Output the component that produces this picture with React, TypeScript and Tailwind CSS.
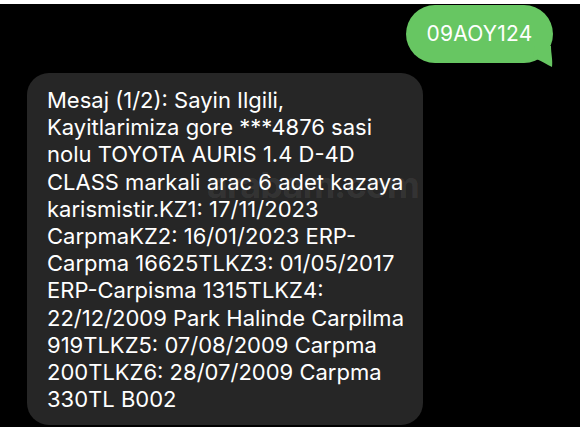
import React from "react";

const lines = [
  "Mesaj (1/2): Sayin Ilgili,",
  "Kayitlarimiza gore ***4876 sasi",
  "nolu TOYOTA AURIS 1.4 D-4D",
  "CLASS markali arac 6 adet kazaya",
  "karismistir.KZ1: 17/11/2023",
  "CarpmaKZ2: 16/01/2023 ERP-",
  "Carpma 16625TLKZ3: 01/05/2017",
  "ERP-Carpisma 1315TLKZ4:",
  "22/12/2009 Park Halinde Carpilma",
  "919TLKZ5: 07/08/2009 Carpma",
  "200TLKZ6: 28/07/2009 Carpma",
  "330TL B002",
];

function SentBubble({ text }: { text: string }) {
  return (
    <div className="relative">
      <div className="h-[58px] w-[147px] rounded-full bg-[#67c662] flex items-center justify-center text-white text-[21px] tracking-[0.2px]">
        {text}
      </div>
      {/* little tail hanging off the bottom right */}
      <svg className="absolute right-[-6px] bottom-[-5px]" width="28" height="22" viewBox="0 0 28 22">
        <path d="M4 0 L20 0 C20 8 22 14 21 21 C16 19 10 14 2 12 Z" fill="#67c662" />
      </svg>
    </div>
  );
}

export default function App() {
  return (
    <div className="w-[580px] h-[435px] bg-white pt-[4px] pb-[8px]" style={{ fontFamily: "Inter, 'Noto Sans', sans-serif" }}>
      <div className="h-[423px] bg-black flex flex-col">
        <div className="flex justify-end pr-[27px] pt-[1px]">
          <SentBubble text="09AOY124" />
        </div>
        <div className="relative ml-[27px] mt-[10px] w-[396px] h-[352px] rounded-[22px] bg-[#262626] pl-[20px] pt-[14px] overflow-hidden">
          <div className="absolute left-[180px] top-[94px] text-[36px] leading-none font-bold text-white/[0.08] tracking-tight">
            arabam.com
          </div>
          <div className="relative text-[22px] leading-[27.2px] text-white">
            {lines.map((l) => (
              <div key={l} className="whitespace-nowrap">{l}</div>
            ))}
          </div>
        </div>
      </div>
    </div>
  );
}
